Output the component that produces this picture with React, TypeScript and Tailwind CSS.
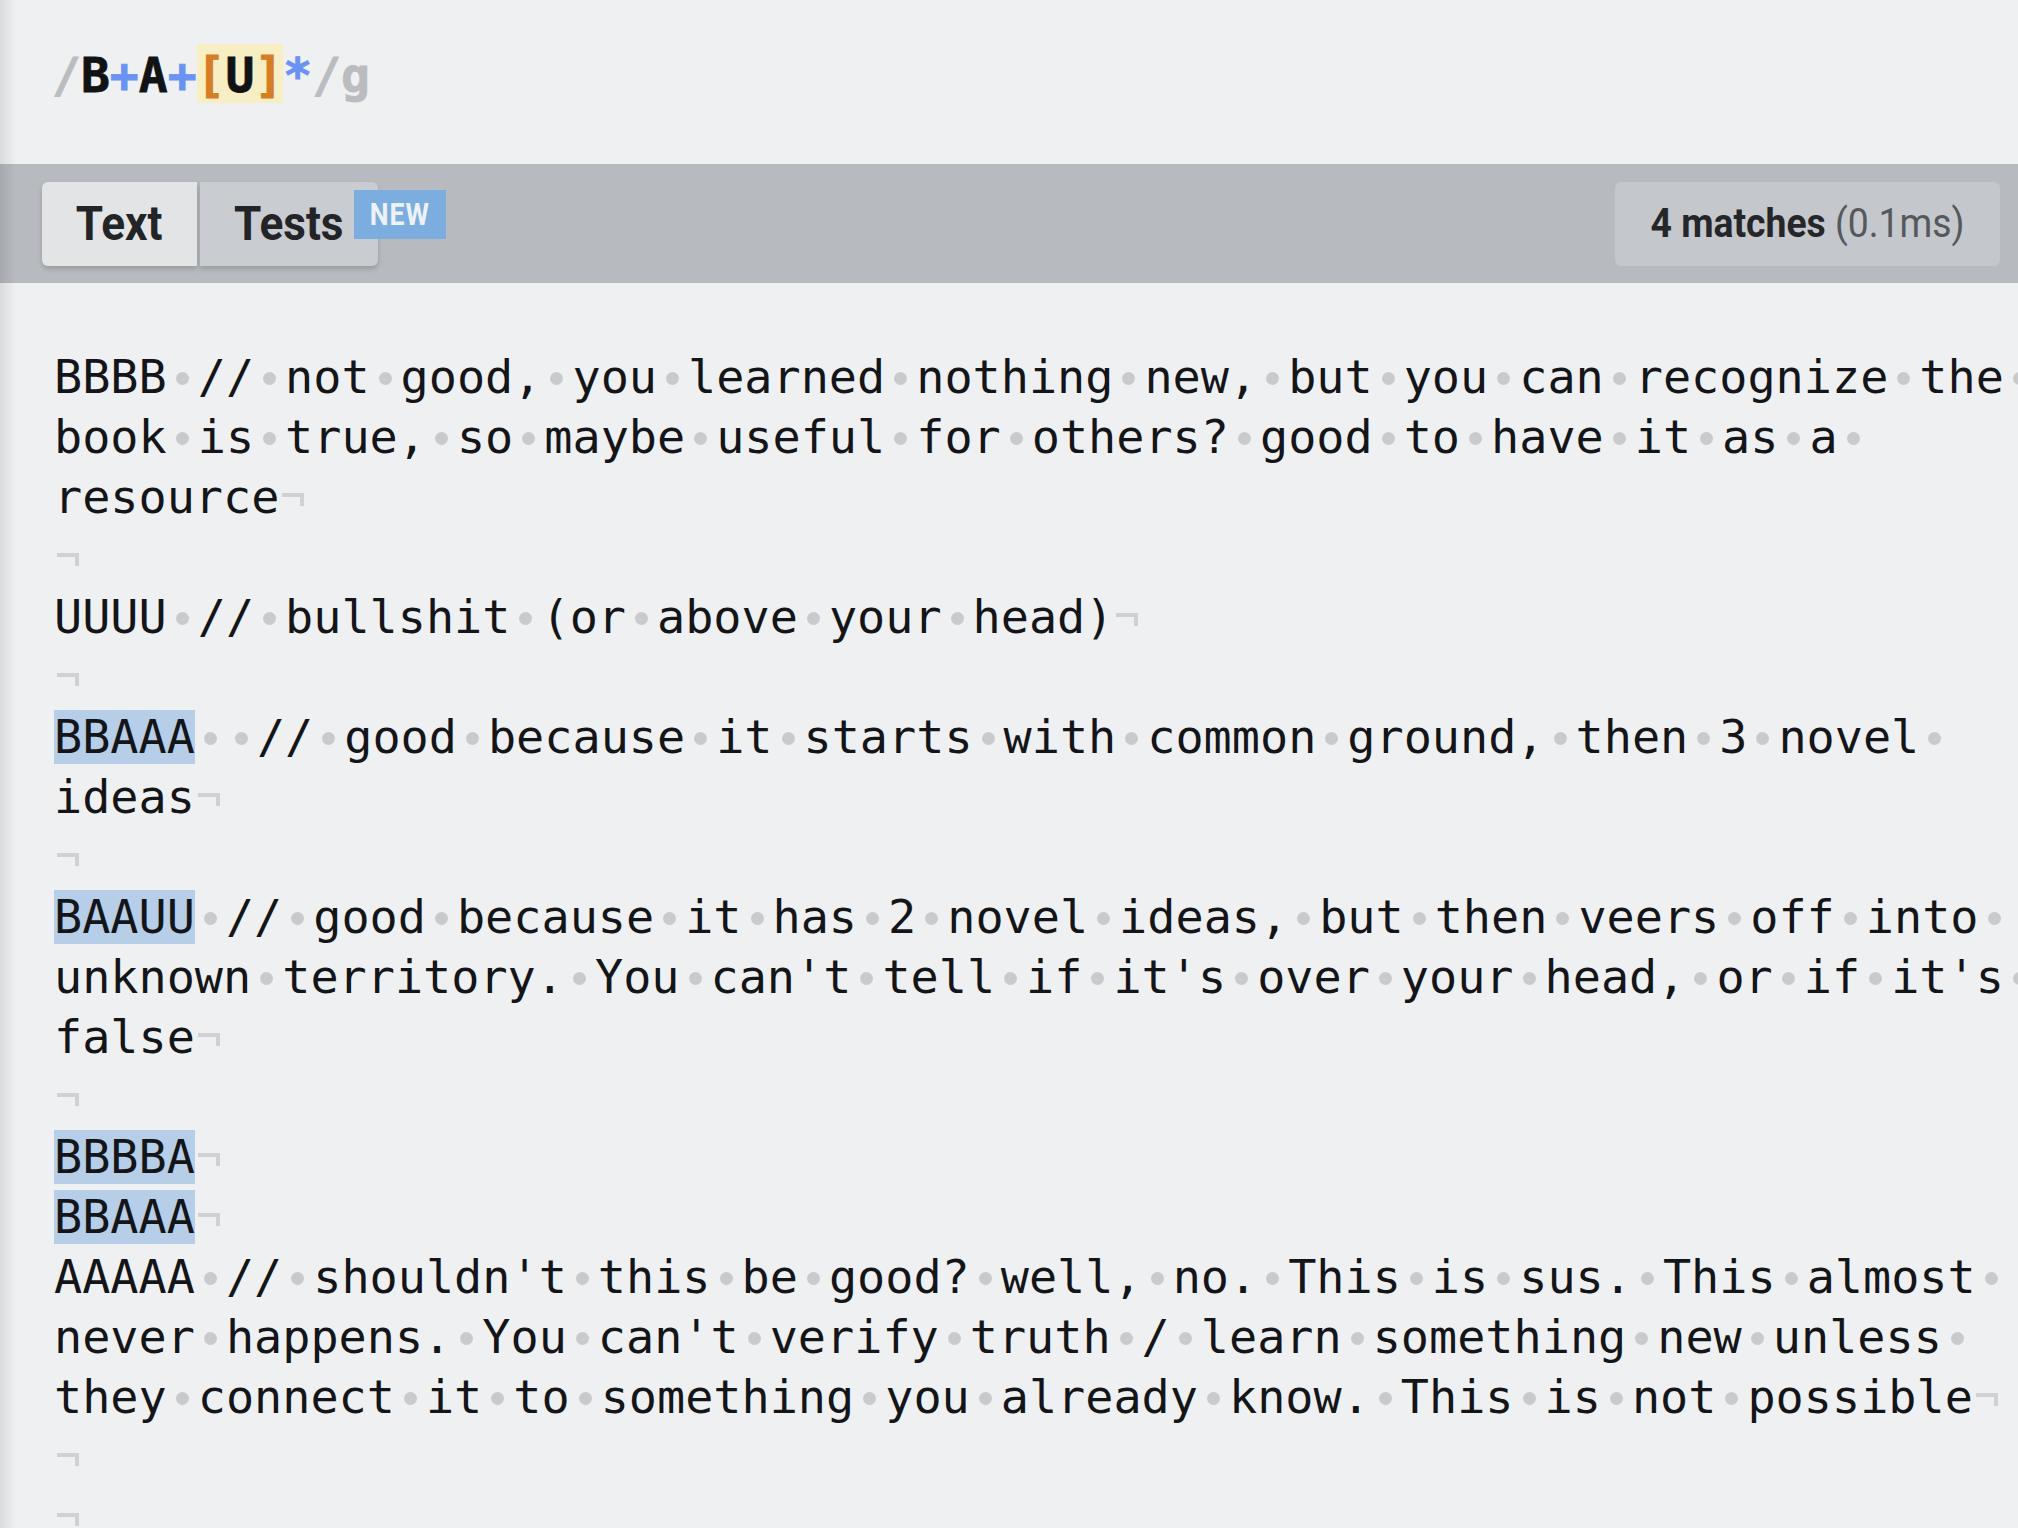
import React from "react";

type Line = { t: string; hl?: number; nl: boolean };

const lines: Line[] = [
  { t: "BBBB // not good, you learned nothing new, but you can recognize the ", nl: false },
  { t: "book is true, so maybe useful for others? good to have it as a ", nl: false },
  { t: "resource", nl: true },
  { t: "", nl: true },
  { t: "UUUU // bullshit (or above your head)", nl: true },
  { t: "", nl: true },
  { t: "BBAAA  // good because it starts with common ground, then 3 novel ", hl: 5, nl: false },
  { t: "ideas", nl: true },
  { t: "", nl: true },
  { t: "BAAUU // good because it has 2 novel ideas, but then veers off into ", hl: 5, nl: false },
  { t: "unknown territory. You can't tell if it's over your head, or if it's ", nl: false },
  { t: "false", nl: true },
  { t: "", nl: true },
  { t: "BBBBA", hl: 5, nl: true },
  { t: "BBAAA", hl: 5, nl: true },
  { t: "AAAAA // shouldn't this be good? well, no. This is sus. This almost ", nl: false },
  { t: "never happens. You can't verify truth / learn something new unless ", nl: false },
  { t: "they connect it to something you already know. This is not possible", nl: true },
  { t: "", nl: true },
  { t: "", nl: true },
];

function Space() {
  return (
    <span className="relative inline-block w-[31px]">
      {" "}
      <span className="absolute left-[9px] top-[25px] h-[13px] w-[13px] rounded-full bg-[#c9cacd]" />
    </span>
  );
}

function Pilcrow() {
  return (
    <span className="relative inline-block w-[28px]">
      {"\u00a0"}
      <span className="absolute left-[3px] top-[26px] h-[13px] w-[22px] border-t-[4px] border-r-[4px] border-[#cfd1d4]" />
    </span>
  );
}

function renderRest(s: string, keyBase: string) {
  const out: React.ReactNode[] = [];
  let buf = "";
  let k = 0;
  for (const ch of s) {
    if (ch === " ") {
      if (buf) {
        out.push(<span key={`${keyBase}-w${k++}`}>{buf}</span>);
        buf = "";
      }
      out.push(<Space key={`${keyBase}-s${k++}`} />);
    } else {
      buf += ch;
    }
  }
  if (buf) out.push(<span key={`${keyBase}-w${k++}`}>{buf}</span>);
  return out;
}

function TextLine({ line, idx }: { line: Line; idx: number }) {
  const hl = line.hl ?? 0;
  const head = line.t.slice(0, hl);
  const rest = line.t.slice(hl);
  return (
    <div className="h-[60px] whitespace-pre leading-[60px]">
      {head && <span className="bg-[#b6cee7]">{head}</span>}
      {renderRest(rest, `l${idx}`)}
      {line.nl && <Pilcrow />}
    </div>
  );
}

export default function App() {
  return (
    <div className="relative h-[1528px] w-full overflow-hidden bg-[#eff0f2]">
      {/* Regex expression */}
      <div className="h-[164px] whitespace-pre pl-[52px] pt-[45px] font-['DejaVu_Sans_Mono',monospace] text-[48px] font-bold leading-[60px] [-webkit-text-stroke:0.8px]">
        <span className="text-[#babcc0]">/</span>
        <span className="text-[#111214]">B</span>
        <span className="text-[#6a92f2]">+</span>
        <span className="text-[#111214]">A</span>
        <span className="text-[#6a92f2]">+</span>
        <span className="bg-[#f7eec4] pt-[3px]">
          <span className="text-[#d67d26]">[</span>
          <span className="text-[#111214]">U</span>
          <span className="text-[#d67d26]">]</span>
        </span>
        <span className="text-[#6a92f2]">*</span>
        <span className="text-[#babcc0]">/g</span>
      </div>

      {/* Tab bar */}
      <div className="flex h-[119px] items-center justify-between bg-[#b7babe] pl-[42px] pr-[18px] font-['Roboto',sans-serif]">
        <div className="flex gap-[3px]">
          <div className="flex h-[84px] w-[155px] items-center justify-center rounded-l-[6px] bg-[#e3e4e6] shadow-[0_3px_5px_rgba(0,0,0,0.16)]">
            <span className="inline-block scale-x-[0.9] text-[49px] font-bold leading-none text-[#232427]">Text</span>
          </div>
          <div className="relative flex h-[84px] w-[178px] items-center justify-center rounded-r-[6px] bg-[#c9ccd0] shadow-[0_3px_5px_rgba(0,0,0,0.16)]">
            <span className="inline-block scale-x-[0.9] text-[49px] font-bold leading-none text-[#232427]">Tests</span>
            <span className="absolute left-[154px] top-[8px] flex h-[49px] w-[92px] items-center justify-center bg-[#7badde]">
              <span className="inline-block scale-x-[0.86] text-[31px] font-bold leading-none tracking-[1px] text-[#eef2f7]">NEW</span>
            </span>
          </div>
        </div>
        <div className="flex h-[84px] w-[385px] items-center justify-center rounded-[6px] bg-[#c4c7cb]">
          <span className="inline-block scale-x-[0.91] whitespace-pre text-[41px] leading-none text-[#25262a]">
            <span className="font-bold">4 matches</span>
            <span className="text-[#55585c]"> (0.1ms)</span>
          </span>
        </div>
      </div>

      {/* Text editor */}
      <div className="pl-[54px] pt-[64px] font-['DejaVu_Sans_Mono',monospace] text-[46.8px] text-[#141518]">
        {lines.map((l, i) => (
          <TextLine key={i} line={l} idx={i} />
        ))}
      </div>

      {/* left edge shadow */}
      <div className="pointer-events-none absolute inset-y-0 left-0 w-[16px] bg-linear-to-r from-black/[0.09] to-transparent" />
    </div>
  );
}
